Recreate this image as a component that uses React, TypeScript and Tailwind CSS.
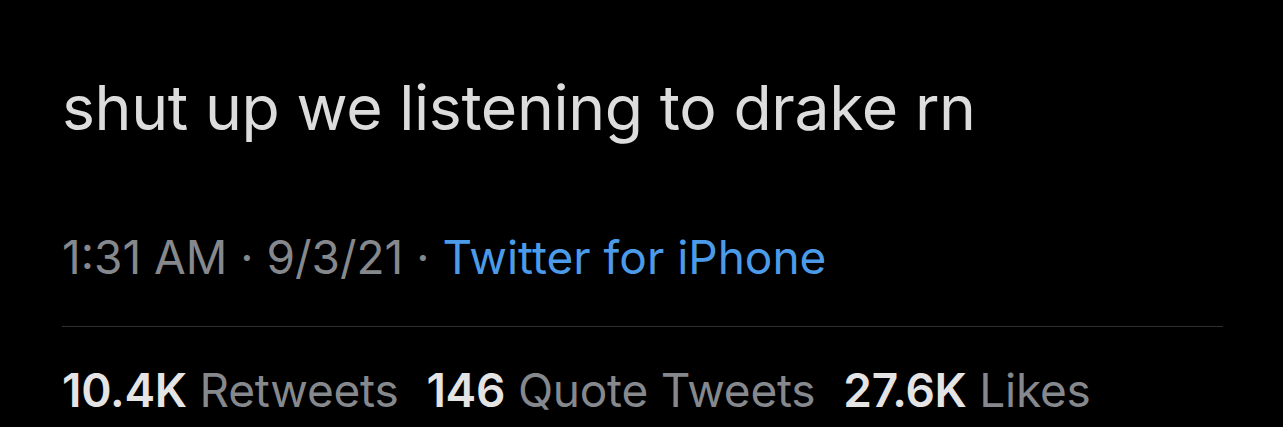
import React from 'react';

const Stat = ({ value, label }: { value: string; label: string }) => (
    <span className="whitespace-nowrap">
        <span className="font-semibold text-[#e4e4e4]">{value}</span>
        <span className="text-[#85888c]"> {label}</span>
    </span>
);

export default function App() {
    return (
        <div className="w-[1283px] h-[427px] bg-black overflow-hidden font-['Inter',sans-serif]">
            <div className="pl-[62px] pr-[60px] pt-[69px]">
                <p className="text-[62.5px] leading-[76px] text-[#dcdcdc] tracking-[-0.4px]">
                    shut up we listening to drake rn
                </p>
                <div className="mt-[84px] text-[46px] leading-[56px] text-[#85888c] whitespace-nowrap">
                    1:31 AM · 9/3/21 · <span className="text-[#4b9be9]">Twitter for iPhone</span>
                </div>
                <div className="mt-[41px] h-px bg-[#2e2f31]" />
                <div className="mt-[35px] flex gap-[28px] text-[46px] leading-[56px] tracking-[-0.25px]">
                    <Stat value="10.4K" label="Retweets" />
                    <Stat value="146" label="Quote Tweets" />
                    <Stat value="27.6K" label="Likes" />
                </div>
            </div>
        </div>
    );
}
